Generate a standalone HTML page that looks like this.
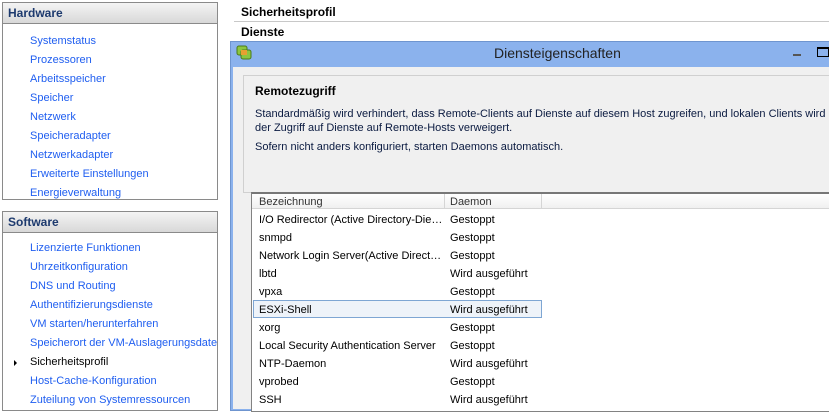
<!DOCTYPE html>
<html><head><style>
*{margin:0;padding:0;box-sizing:border-box}
body{width:829px;height:408px;overflow:hidden;background:#fff;font-family:"Liberation Sans",Arial,sans-serif;font-size:11px;color:#000;position:relative}
.a{position:absolute;white-space:nowrap}
.box{position:absolute;left:2px;width:216px;border:1px solid #8a8a8a;background:#fff;overflow:hidden}
.hd{height:21px;background:linear-gradient(#f4f4f4,#d8d8d8);border-bottom:1px solid #8a8a8a;font-weight:bold;color:#1d3a6e;font-size:12px;padding:3px 0 0 5px}
.lk{position:absolute;left:27px;color:#1f5ef0;font-size:11px;white-space:nowrap}
.row{position:absolute;left:253px;width:289px;height:18px;font-size:11px}
.row span{position:absolute;top:4px;overflow:hidden;text-overflow:ellipsis;white-space:nowrap}
.row span:first-child{width:185px}
</style></head><body>
<div class="box" style="top:2px;height:198px">
<div class="hd">Hardware</div>
<div class="lk" style="top:32px">Systemstatus</div>
<div class="lk" style="top:51px">Prozessoren</div>
<div class="lk" style="top:70px">Arbeitsspeicher</div>
<div class="lk" style="top:89px">Speicher</div>
<div class="lk" style="top:108px">Netzwerk</div>
<div class="lk" style="top:127px">Speicheradapter</div>
<div class="lk" style="top:146px">Netzwerkadapter</div>
<div class="lk" style="top:165px">Erweiterte Einstellungen</div>
<div class="lk" style="top:184px">Energieverwaltung</div>
</div>
<div class="box" style="top:211px;height:200px">
<div class="hd">Software</div>
<div class="lk" style="top:30px">Lizenzierte Funktionen</div>
<div class="lk" style="top:49px">Uhrzeitkonfiguration</div>
<div class="lk" style="top:68px">DNS und Routing</div>
<div class="lk" style="top:87px">Authentifizierungsdienste</div>
<div class="lk" style="top:106px">VM starten/herunterfahren</div>
<div class="lk" style="top:125px">Speicherort der VM-Auslagerungsdatei</div>
<div class="a" style="left:11px;top:148px;width:0;height:0;border-left:3px solid #000;border-top:3px solid transparent;border-bottom:3px solid transparent"></div>
<div class="lk" style="top:144px;color:#000">Sicherheitsprofil</div>
<div class="lk" style="top:163px">Host-Cache-Konfiguration</div>
<div class="lk" style="top:182px">Zuteilung von Systemressourcen</div>
</div>
<div class="a" style="left:241px;top:5px;font-weight:bold;font-size:12px">Sicherheitsprofil</div>
<div class="a" style="left:234px;top:21px;width:595px;height:1px;background:#c8c8c8"></div>
<div class="a" style="left:241px;top:25px;font-weight:bold;font-size:12px">Dienste</div>
<div class="a" style="left:230px;top:41px;width:600px;height:370px;background:#8bb2ed;border:1px solid #6f95cf"></div>
<div class="a" style="left:233px;top:67px;width:597px;height:342px;background:#f0f0f0"></div>
<svg class="a" style="left:235px;top:45px" width="18" height="16" viewBox="0 0 18 16"><rect x="2" y="1" width="10" height="9" rx="2" fill="#8cc63f" stroke="#4a7a1a"/><rect x="6" y="5" width="10" height="9" rx="2" fill="#8cc63f" stroke="#4a7a1a"/><rect x="6" y="5" width="6" height="5" fill="#e8a030"/></svg>
<div class="a" style="left:494px;top:45px;font-size:14px;color:#222">Diensteigenschaften</div>
<div class="a" style="left:793px;top:54px;width:8px;height:2px;background:#555"></div>
<div class="a" style="left:817px;top:47px;width:12px;height:10px;border:1px solid #000;border-top-width:2px"></div>
<div class="a" style="left:243px;top:75px;width:590px;height:118px;border:1px solid #d0d0d0;border-right:none;background:#f0f0f0"></div>
<div class="a" style="left:255px;top:84px;font-weight:bold;font-size:12px">Remotezugriff</div>
<div class="a" style="left:255px;top:108px;color:#0a1a40">Standardmäßig wird verhindert, dass Remote-Clients auf Dienste auf diesem Host zugreifen, und lokalen Clients wird</div>
<div class="a" style="left:255px;top:122px;color:#0a1a40">der Zugriff auf Dienste auf Remote-Hosts verweigert.</div>
<div class="a" style="left:255px;top:141px;color:#0a1a40">Sofern nicht anders konfiguriert, starten Daemons automatisch.</div>
<div class="a" style="left:251px;top:192px;width:580px;height:220px;background:#fff;border:1px solid #828282;border-top:2px solid #777;border-right:none"></div>
<div class="a" style="left:252px;top:194px;width:578px;height:15px;background:linear-gradient(#fff,#f0f0f0);border-bottom:1px solid #d5d5d5"></div>
<div class="a" style="left:444px;top:194px;width:1px;height:15px;background:#d5d5d5"></div>
<div class="a" style="left:541px;top:194px;width:1px;height:15px;background:#d5d5d5"></div>
<div class="a" style="left:259px;top:196px;color:#333">Bezeichnung</div>
<div class="a" style="left:450px;top:196px;color:#333">Daemon</div>
<div class="row" style="top:210px"><span style="left:6px">I/O Redirector (Active Directory-Dienst)</span><span style="left:197px">Gestoppt</span></div>
<div class="row" style="top:228px"><span style="left:6px">snmpd</span><span style="left:197px">Gestoppt</span></div>
<div class="row" style="top:246px"><span style="left:6px">Network Login Server(Active Directory)</span><span style="left:197px">Gestoppt</span></div>
<div class="row" style="top:264px"><span style="left:6px">lbtd</span><span style="left:197px">Wird ausgeführt</span></div>
<div class="row" style="top:282px"><span style="left:6px">vpxa</span><span style="left:197px">Gestoppt</span></div>
<div class="row" style="top:300px;background:#eef3f9;border:1px solid #7ea6d3"><span style="left:5px;top:3px">ESXi-Shell</span><span style="left:196px;top:3px">Wird ausgeführt</span></div>
<div class="row" style="top:318px"><span style="left:6px">xorg</span><span style="left:197px">Gestoppt</span></div>
<div class="row" style="top:336px"><span style="left:6px">Local Security Authentication Server</span><span style="left:197px">Gestoppt</span></div>
<div class="row" style="top:354px"><span style="left:6px">NTP-Daemon</span><span style="left:197px">Wird ausgeführt</span></div>
<div class="row" style="top:372px"><span style="left:6px">vprobed</span><span style="left:197px">Gestoppt</span></div>
<div class="row" style="top:390px"><span style="left:6px">SSH</span><span style="left:197px">Wird ausgeführt</span></div>
</body></html>
